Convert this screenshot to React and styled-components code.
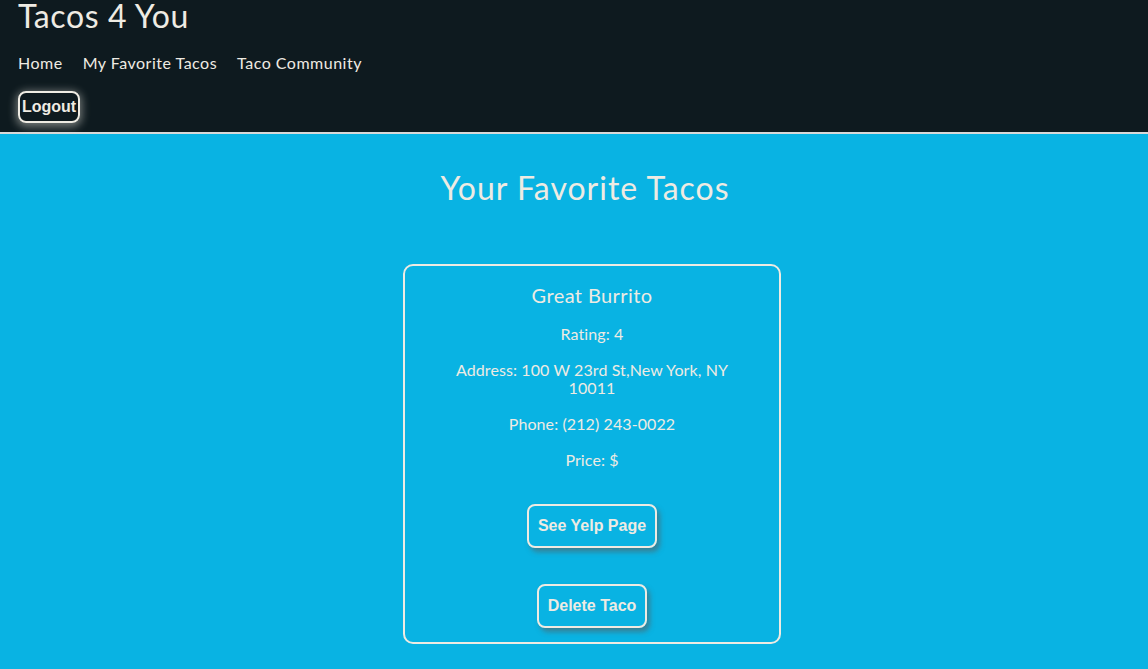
import React from 'react';
import styled, { createGlobalStyle } from 'styled-components';

const GlobalStyle = createGlobalStyle`
    html, body {
        margin: 0;
        padding: 0;
        background: #09B3E3;
    }
    body {
        font-family: "Lato", "Open Sans", sans-serif;
        color: #EEEBE3;
    }
`

const Header = styled.header`
    background: #0E1A1F;
    border-bottom: 2px solid #D8D8D8;
    padding: 0 18px 9px;
`

const Title = styled.h1`
    margin: 0;
    font-size: 32px;
    font-weight: 400;
    line-height: 32px;
    letter-spacing: 0.6px;
`

const Nav = styled.nav`
    display: flex;
    gap: 20px;
    margin-top: 20px;
    height: 20px;
    align-items: center;
`

const NavLink = styled.a`
    font-size: 16px;
    letter-spacing: 0.5px;
    color: #EEEBE3;
    text-decoration: none;
    cursor: pointer;
`

const Button = styled.button`
    font-family: "Liberation Sans", Arial, sans-serif;
    font-weight: 700;
    font-size: 16px;
    line-height: 18px;
    color: #EEEBE3;
    background: transparent;
    border: 2px solid #EEEBE3;
    border-radius: 8px;
    padding: ${props => props.small ? '5px 2px' : '11px 9px'};
    box-shadow: ${props => props.glow
        ? '0 2px 8px 2px rgba(238, 235, 227, 0.45)'
        : '3px 4px 5px rgba(90, 90, 90, 0.55)'};
    cursor: pointer;
`

const HeaderActions = styled.div`
    margin-top: 19px;
`

const Main = styled.main`
    display: flex;
    flex-direction: column;
    align-items: center;
    padding-left: 22px;
`

const Heading = styled.h2`
    margin: 36px 0 0;
    font-size: 32px;
    font-weight: 400;
    line-height: 36px;
    letter-spacing: 1px;
`

const Card = styled.div`
    margin: 58px 0 0 14px;
    width: 374px;
    border: 2px solid #EEEBE3;
    border-radius: 10px;
    display: flex;
    flex-direction: column;
    align-items: center;
    padding: 17px 0 14px;
`

const CardTitle = styled.h3`
    margin: 0;
    font-size: 20px;
    font-weight: 400;
    line-height: 24px;
    letter-spacing: 0.4px;
`

const Info = styled.p`
    margin: 18px 0 0;
    width: 280px;
    font-size: 16px;
    line-height: 18px;
    letter-spacing: 0.1px;
    text-align: center;
`

const ButtonRow = styled.div`
    margin-top: ${props => props.first ? '35px' : '36px'};
`

export default function App() {
    return (
        <>
            <GlobalStyle />
            <Header>
                <Title>Tacos 4 You</Title>
                <Nav>
                    <NavLink>Home</NavLink>
                    <NavLink>My Favorite Tacos</NavLink>
                    <NavLink>Taco Community</NavLink>
                </Nav>
                <HeaderActions>
                    <Button small glow>Logout</Button>
                </HeaderActions>
            </Header>
            <Main>
                <Heading>Your Favorite Tacos</Heading>
                <Card>
                    <CardTitle>Great Burrito</CardTitle>
                    <Info>Rating: 4</Info>
                    <Info>Address: 100 W 23rd St,New York, NY 10011</Info>
                    <Info>Phone: (212) 243-0022</Info>
                    <Info>Price: $</Info>
                    <ButtonRow first>
                        <Button>See Yelp Page</Button>
                    </ButtonRow>
                    <ButtonRow>
                        <Button>Delete Taco</Button>
                    </ButtonRow>
                </Card>
            </Main>
        </>
    )
}
